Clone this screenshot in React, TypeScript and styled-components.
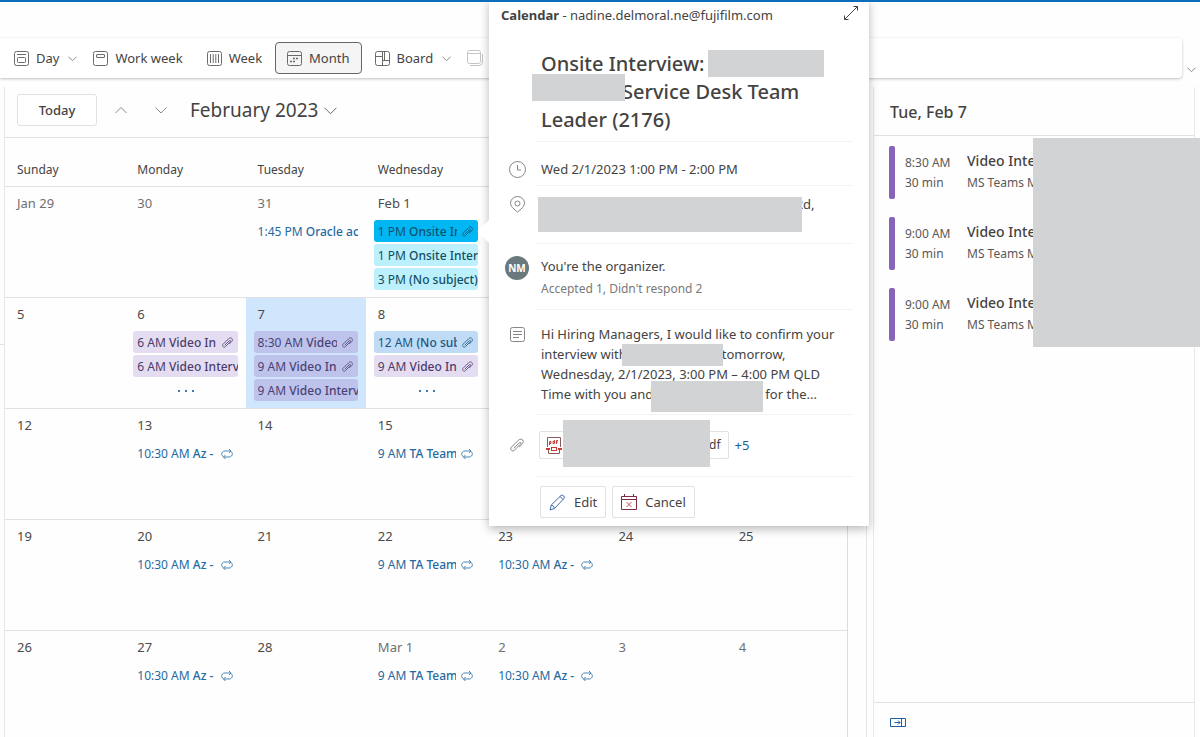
import React from "react";
import styled, { createGlobalStyle, css } from "styled-components";

const GlobalStyle = createGlobalStyle`
  *, *::before, *::after { box-sizing: border-box; }
  body {
    margin: 0;
    background: #fefefe;
    color: #444342;
    font-family: "Noto Sans", "Open Sans", sans-serif;
    font-size: 13px;
    line-height: 20px;
    overflow: hidden;
  }
  button { font: inherit; color: inherit; cursor: pointer; }
  h1, h2, h3, p, ul { margin: 0; padding: 0; }
`;

/* ---------- icons ---------- */

const Svg = styled.svg.attrs({ fill: "none", "aria-hidden": true })`
  flex: none;
  display: block;
  stroke: currentColor;
  stroke-width: 1;
`;

const Chevron = ({ size = 9, up = false }: { size?: number; up?: boolean }) => (
  <Svg width={size} height={size} viewBox="0 0 12 12">
    <path vectorEffect="non-scaling-stroke" d={up ? "M.5 9 6 3.5 11.5 9" : "M.5 3.5 6 9l5.5-5.5"} />
  </Svg>
);

const DayIcon = () => (
  <Svg width="15" height="15" viewBox="0 0 15 15">
    <rect x=".5" y=".5" width="14" height="14" rx="2" />
    <path d="M3 3.5h9" />
    <rect x="3.5" y="6.5" width="8" height="5" rx="1" />
  </Svg>
);

const WorkWeekIcon = () => (
  <Svg width="15" height="15" viewBox="0 0 15 15">
    <rect x=".5" y=".5" width="14" height="14" rx="2" />
    <rect x="3.5" y="3.5" width="8" height="3" rx=".5" />
  </Svg>
);

const WeekIcon = () => (
  <Svg width="15" height="15" viewBox="0 0 15 15">
    <rect x=".5" y=".5" width="14" height="14" rx="2" />
    <path d="M3.500 3v9M6.200 3v9M8.800 3v9M11.500 3v9" />
  </Svg>
);

const MonthIcon = () => (
  <Svg width="15" height="15" viewBox="0 0 15 15">
    <rect x=".5" y=".5" width="14" height="14" rx="2" />
    <path d="M.5 4.5h14" />
    <path strokeWidth="1.5" strokeDasharray="2 1" d="M6 7.5h6M3 10.5h6" />
  </Svg>
);

const BoardIcon = () => (
  <Svg width="15" height="15" viewBox="0 0 15 15">
    <rect x=".5" y=".5" width="14" height="14" rx="2" />
    <path d="M7.500.5v14M.5 5.500h7M7.500 9.500h7M9.500 9.500v-9" />
  </Svg>
);

const OverlayIcon = () => (
  <Svg width="17" height="17" viewBox="0 0 17 17">
    <rect x=".5" y=".5" width="13" height="13" rx="2" />
    <path d="M.5 3.5h13M3 15.5h9q3.500 0 3.500-3.500V4" />
  </Svg>
);

const ClipIcon = ({ size = 11 }: { size?: number }) => (
  <Svg width={size} height={size} viewBox="0 0 14 14">
    <path
      vectorEffect="non-scaling-stroke"
      d="M3.600 10.400 9.300 4.700c1-1 2.300.2 1.300 1.300l-6.200 6.200c-2 2-5-.9-3-3L8.200 2.400c3.200-3.100 6.700.3 4.300 3.200L9.200 9"
    />
  </Svg>
);

const RepeatIcon = () => (
  <Svg width="12" height="12" viewBox="0 0 12 12">
    <path d="M2.500 9C.5 7.500 0 5.500 1.500 4c.7-.8 1.500-1 2.500-1h6M8 1l2 2-2 2M9.500 3c2 1.500 2.500 3.500 1 5-.7.8-1.500 1-2.500 1H2.500M4.500 7l-2 2 2 2" />
  </Svg>
);

const ExpandIcon = () => (
  <Svg width="14" height="14" viewBox="0 0 14 14">
    <path d="M.8 13.200 13.200.8M9.500.5h4v4M.5 9.500v4h4" />
  </Svg>
);

const ClockIcon = () => (
  <Svg width="17" height="17" viewBox="0 0 17 17">
    <circle cx="8.500" cy="8.500" r="8" />
    <path d="M8.500 4v5H12" />
  </Svg>
);

const PinIcon = () => (
  <Svg width="17" height="17" viewBox="0 0 17 17">
    <path d="M8.500 16.200 3.400 11.500A7 7 0 0 1 1.500 7.200a7 6.700 0 0 1 14 0 7 7 0 0 1-1.900 4.300Z" />
    <circle cx="8.500" cy="7.500" r="2.500" />
  </Svg>
);

const NoteIcon = () => (
  <Svg width="15" height="15" viewBox="0 0 15 15">
    <rect x=".5" y=".5" width="14" height="14" rx="2" />
    <path d="M3 4.500h9M3 7.500h9M3 10.500h6" />
  </Svg>
);

const PdfIcon = () => (
  <Svg width="16" height="17" viewBox="0 0 16 17">
    <path stroke="#8a5a5a" d="M1.500 10V.5h13V10" />
    <path stroke="#c43e35" d="M3.500 8V4.500h1.500v2H3.500M8.500 3v3.500H7v-2h1.500M10.500 7V3.500h1.500M9.800 5h2" />
    <path stroke="#c43e35" strokeWidth="2" d="M0 12h4M12 12h4" />
    <rect stroke="#c43e35" x="5.500" y="10.500" width="5" height="3" />
    <path stroke="#8a5a5a" d="M2.500 13v3.500h11V13" />
  </Svg>
);

const PencilIcon = () => (
  <Svg width="17" height="17" viewBox="0 0 17 17">
    <path
      stroke="#3f68a8"
      d="M1 16 2.300 11 12 1.500q1.200-1 2.600.3t.3 2.700L5.500 14.500ZM11 2.500 14 5.500M2.300 11q2.500.5 3.200 3.500"
    />
  </Svg>
);

const CancelIcon = () => (
  <Svg width="16" height="16" viewBox="0 0 16 16">
    <path stroke="#7d2c45" d="M.5 2.500h15v13H.5zM.5 5.500h15M3.500 0v3M12.500 0v3" />
    <path stroke="#c0504a" d="m5.500 8 5 5M10.500 8l-5 5" />
  </Svg>
);

const DockIcon = () => (
  <Svg width="16" height="9" viewBox="0 0 16 9">
    <path d="M.5.500h15v8H.5zM11.500.5v8M4.500 4.500H10M8 2.500l2 2-2 2" />
  </Svg>
);

/* ---------- page frame ---------- */

const Page = styled.div`
  position: relative;
  height: 100vh;
  display: flex;
  flex-direction: column;
  border-top: 2px solid #0f6cb8;
  overflow: hidden;
`;

const RibbonRow = styled.div`
  display: flex;
  align-items: flex-end;
  flex: none;
  margin-top: 36px;
`;

const Ribbon = styled.div`
  flex: 1;
  display: flex;
  align-items: center;
  height: 40px;
  padding-left: 2px;
  background: #fff;
  border-radius: 0 4px 4px 0;
  box-shadow: 0 1px 3px rgba(0, 0, 0, 0.25);
`;

const RibbonToggle = styled.button`
  width: 18px;
  height: 18px;
  padding: 0 0 0 5px;
  border: 0;
  background: none;
  svg { color: #8a8a8a; }
`;

const ToolButton = styled.button<{ $active?: boolean; $split?: boolean; $faded?: boolean }>`
  display: flex;
  align-items: center;
  gap: 7px;
  height: 32px;
  padding: 0 ${(p) => (p.$split ? 3 : 11)}px 0 11px;
  border: 1px solid transparent;
  border-radius: 4px;
  background: none;
  white-space: nowrap;
  svg { color: ${(p) => (p.$faded ? "#c4c4c4" : "#6a6a6a")}; }
  ${(p) => p.$active && css`
    margin: 0 1px;
    border-color: #666;
    background: #f5f5f5;
  `}
`;

const SplitMark = styled.span`
  padding-left: 2px;
  svg { color: #8a8a8a; }
`;

const Main = styled.main`
  flex: 1;
  min-height: 0;
  display: flex;
  margin-top: 9px;
  padding-right: 5px;
`;

const Rail = styled.div`
  flex: none;
  width: 4px;
  height: 258px;
  border-bottom: 1px solid #e1e1e1;
`;

const CalendarPanel = styled.section`
  flex: 1;
  min-width: 0;
  overflow: hidden;
  border: solid #e6e6e6;
  border-width: 0 1px;
`;

/* ---------- calendar ---------- */

const CalendarHeader = styled.header`
  display: flex;
  align-items: center;
  height: 51px;
  padding: 0 12px 4px;
  border-bottom: 1px solid #e1e1e1;
`;

const TodayButton = styled.button`
  width: 80px;
  height: 32px;
  border: 1px solid #e1e1e1;
  border-radius: 3px;
  background: #fff;
  font-weight: 500;
`;

const StepButton = styled.button`
  display: flex;
  align-items: center;
  justify-content: center;
  width: 40px;
  height: 32px;
  padding: 0;
  border: 0;
  background: none;
  color: #8a8a8a;
`;

const Steps = styled.div`
  display: flex;
  margin: 0 9px 0 4px;
`;

const MonthButton = styled.button`
  display: flex;
  align-items: center;
  gap: 6px;
  padding: 0;
  border: 0;
  background: none;
  font-size: 19px;
  line-height: 28px;
  svg { color: #6a6a6a; }
`;

const MonthTable = styled.table`
  width: calc(100% - 18px);
  table-layout: fixed;
  border-collapse: separate;
  border-spacing: 0;
  border-right: 1px solid #dcdcdc;
`;

const WeekdayCell = styled.th`
  height: 49px;
  padding: 16px 0 0 12px;
  border-bottom: 1px solid #e1e1e1;
  font-size: 12px;
  font-weight: 400;
  text-align: left;
`;

const DayCell = styled.td<{ $today?: boolean }>`
  height: 111px;
  padding: 0 8px;
  border-bottom: 1px solid #e1e1e1;
  vertical-align: top;
  background: ${(p) => (p.$today ? "#cfe6fd" : "transparent")};
`;

const DayNumber = styled.div<{ $muted?: boolean }>`
  padding: 6px 4px 7px;
  color: ${(p) => (p.$muted ? "#707070" : "#4c4a48")};
`;

const EventList = styled.div`
  display: flex;
  flex-direction: column;
  gap: 2px;
`;

const tones = {
  plain: ["transparent", "#1f6aa0"],
  strong: ["#00b7f4", "#10506e"],
  cyan: ["#bdf0fd", "#104f62"],
  lilac: ["#e4dcf0", "#4b3d6b"],
  violet: ["#bdc3ea", "#4a4277"],
  blue: ["#c0dbf6", "#1d5580"],
} as const;
type Tone = keyof typeof tones;

const EventChip = styled.button<{ $tone: Tone; $icon: boolean }>`
  display: flex;
  align-items: center;
  gap: 5px;
  width: 100%;
  height: 22px;
  padding: 1px ${(p) => (p.$icon ? 5 : 0)}px 0 4px;
  border: 0;
  border-radius: 3px;
  background: ${(p) => tones[p.$tone][0]};
  color: ${(p) => tones[p.$tone][1]};
  font-size: 12px;
  text-align: left;
  svg { opacity: 0.8; }
`;

const EventText = styled.span`
  flex: 1;
  min-width: 0;
  overflow: hidden;
  white-space: nowrap;
  b { font-weight: 500; }
`;

const MoreButton = styled.button`
  display: flex;
  align-items: center;
  justify-content: center;
  gap: 5px;
  height: 24px;
  padding: 0 0 0 2px;
  border: 0;
  background: none;
`;

const Dot = styled.span`
  width: 2px;
  height: 2px;
  background: #3a79b7;
`;

/* ---------- agenda ---------- */

const AgendaPanel = styled.aside`
  position: relative;
  flex: none;
  display: flex;
  flex-direction: column;
  width: 322px;
  margin-left: 6px;
  border: solid #e8e8e8;
  border-width: 0 1px;
`;

const AgendaTitle = styled.h2`
  height: 49px;
  padding: 13px 16px 0;
  border-bottom: 1px solid #e1e1e1;
  font-size: 16px;
  line-height: 24px;
  font-weight: 500;
`;

const Agenda = styled.ul`
  flex: 1;
  display: flex;
  flex-direction: column;
  gap: 18px;
  padding: 10px 15px;
  list-style: none;
`;

const AgendaItem = styled.li`
  display: grid;
  grid-template-columns: 6px 52px 1fr;
  column-gap: 10px;
  height: 53px;
  font-size: 12px;
`;

const AgendaBar = styled.span`
  border-radius: 2px;
  background: #8764b8;
`;

const AgendaText = styled.div`
  padding-top: 7px;
  white-space: nowrap;
  overflow: hidden;
  color: #5a5856;
`;

const AgendaSubject = styled(AgendaText)`
  padding-top: 5px;
  b { display: block; height: 22px; font-size: 14px; font-weight: 500; color: #444342; }
`;

const AgendaCover = styled.div`
  position: absolute;
  top: 51px;
  right: -6px;
  width: 167px;
  height: 209px;
  background: #d2d3d5;
`;

const AgendaFooter = styled.footer`
  height: 35px;
  padding: 15px 16px 0;
  border-top: 1px solid #e1e1e1;
  color: #1c5fa5;
  button { display: block; padding: 0; border: 0; background: none; color: inherit; }
`;

/* ---------- event card ---------- */

const Card = styled.div`
  position: absolute;
  top: -2px;
  left: 489px;
  width: 380px;
  padding: 0 16px 8px 12px;
  background: #fff;
  box-shadow: 0 3px 9px rgba(0, 0, 0, 0.28);
  &::before {
    content: "";
    position: absolute;
    top: 223px;
    left: -8px;
    width: 17px;
    height: 17px;
    background: #fff;
    transform: rotate(45deg);
  }
`;

const CardHeader = styled.header`
  display: flex;
  align-items: center;
  justify-content: space-between;
  height: 30px;
  margin-right: -16px;
  padding-right: 11px;
  b { font-weight: 700; }
  button { padding: 0; margin-top: -4px; border: 0; background: none; }
`;

const Section = styled.div<{ $h: number; $pad: number; $last?: boolean }>`
  display: grid;
  grid-template-columns: 32px 1fr;
  column-gap: 4px;
  height: ${(p) => p.$h}px;
  > * { padding-top: ${(p) => p.$pad}px; }
  > :last-child { border-bottom: ${(p) => (p.$last ? 0 : 1)}px solid #f3f3f3; }
`;

const IconCell = styled.div<{ $line?: number }>`
  display: grid;
  grid-template-rows: ${(p) => p.$line ?? 20}px;
  place-items: center;
  align-content: start;
  color: #858585;
`;

const Content = styled.div`
  padding-left: 4px;
  white-space: nowrap;
`;

const CardTitle = styled.h1`
  font-size: 20px;
  font-weight: 500;
`;

const Line = styled.div<{ $h?: number }>`
  display: flex;
  align-items: flex-start;
  height: ${(p) => p.$h ?? 20}px;
  line-height: ${(p) => p.$h ?? 20}px;
  white-space: pre;
`;

const Cover = styled.span<{ $w: number; $h: number; $m?: string }>`
  position: relative;
  z-index: 1;
  flex: none;
  width: ${(p) => p.$w}px;
  height: ${(p) => p.$h}px;
  margin: ${(p) => p.$m ?? "0"};
  background: #d2d3d5;
`;

const Avatar = styled.div`
  display: flex;
  align-items: center;
  justify-content: center;
  width: 24px;
  height: 24px;
  border-radius: 50%;
  background: #69797e;
  color: #fff;
  font-size: 10px;
  font-weight: 700;
`;

const Secondary = styled.p`
  margin-top: 3px;
  font-size: 12px;
  color: #7b7977;
`;

const AttachmentRow = styled.div`
  display: flex;
  align-items: center;
  gap: 6px;
  margin-left: -2px;
`;

const Attachment = styled.button`
  display: flex;
  align-items: center;
  height: 28px;
  padding: 0 7px 0 6px;
  border: 1px solid #e1e1e1;
  border-radius: 2px;
  background: #fff;
  font-size: 12px;
`;

const MoreLink = styled.a`
  color: #14648f;
  text-decoration: none;
`;

const Actions = styled.div`
  display: flex;
  gap: 6px;
  margin-left: -1px;
`;

const ActionButton = styled.button`
  display: flex;
  align-items: center;
  gap: 8px;
  height: 32px;
  padding: 0 8px;
  border: 1px solid #e1e1e1;
  border-radius: 2px;
  background: #fff;
`;

/* ---------- data ---------- */

type Ev = { time: string; title: string; tone?: Tone; icon?: "clip" | "repeat" };
type Day = { label: string; muted?: boolean; today?: boolean; events?: Ev[]; more?: boolean };

const azure: Ev = { time: "10:30 AM", title: "Az -", icon: "repeat" };
const team: Ev = { time: "9 AM", title: "TA Team", icon: "repeat" };

const weekdays = ["Sunday", "Monday", "Tuesday", "Wednesday", "Thursday", "Friday", "Saturday"];

const weeks: Day[][] = [
  [
    { label: "Jan 29", muted: true },
    { label: "30", muted: true },
    { label: "31", muted: true, events: [{ time: "1:45 PM", title: "Oracle ac" }] },
    {
      label: "Feb 1",
      events: [
        { time: "1 PM", title: "Onsite In", tone: "strong", icon: "clip" },
        { time: "1 PM", title: "Onsite Inter", tone: "cyan" },
        { time: "3 PM", title: "(No subject)", tone: "cyan" },
      ],
    },
    { label: "2" },
    { label: "3" },
    { label: "4" },
  ],
  [
    { label: "5" },
    {
      label: "6",
      more: true,
      events: [
        { time: "6 AM", title: "Video In", tone: "lilac", icon: "clip" },
        { time: "6 AM", title: "Video Interv", tone: "lilac" },
      ],
    },
    {
      label: "7",
      today: true,
      events: [
        { time: "8:30 AM", title: "Video", tone: "violet", icon: "clip" },
        { time: "9 AM", title: "Video In", tone: "violet", icon: "clip" },
        { time: "9 AM", title: "Video Interv", tone: "violet" },
      ],
    },
    {
      label: "8",
      more: true,
      events: [
        { time: "12 AM", title: "(No sub", tone: "blue", icon: "clip" },
        { time: "9 AM", title: "Video In", tone: "lilac", icon: "clip" },
      ],
    },
    { label: "9" },
    { label: "10" },
    { label: "11" },
  ],
  [
    { label: "12" },
    { label: "13", events: [azure] },
    { label: "14" },
    { label: "15", events: [team] },
    { label: "16" },
    { label: "17" },
    { label: "18" },
  ],
  [
    { label: "19" },
    { label: "20", events: [azure] },
    { label: "21" },
    { label: "22", events: [team] },
    { label: "23", events: [azure] },
    { label: "24" },
    { label: "25" },
  ],
  [
    { label: "26" },
    { label: "27", events: [azure] },
    { label: "28" },
    { label: "Mar 1", muted: true, events: [team] },
    { label: "2", muted: true, events: [azure] },
    { label: "3", muted: true },
    { label: "4", muted: true },
  ],
];

const agenda = ["8:30 AM", "9:00 AM", "9:00 AM"];

/* ---------- parts ---------- */

const DayView = ({ day }: { day: Day }) => (
  <DayCell $today={day.today}>
    <DayNumber $muted={day.muted}>{day.label}</DayNumber>
    <EventList>
      {day.events?.map((e, i) => (
        <EventChip key={i} $tone={e.tone ?? "plain"} $icon={!!e.icon}>
          <EventText>
            {e.time} <b>{e.title}</b>
          </EventText>
          {e.icon === "clip" && <ClipIcon />}
          {e.icon === "repeat" && <RepeatIcon />}
        </EventChip>
      ))}
      {day.more && (
        <MoreButton aria-label="More events">
          <Dot />
          <Dot />
          <Dot />
        </MoreButton>
      )}
    </EventList>
  </DayCell>
);

const EventCard = () => (
  <Card role="dialog" aria-label="Event details">
    <CardHeader>
      <span>
        <b>Calendar</b> - nadine.delmoral.ne@fujifilm.com
      </span>
      <button aria-label="Expand">
        <ExpandIcon />
      </button>
    </CardHeader>
    <Section $h={112} $pad={20}>
      <IconCell />
      <Content>
        <CardTitle>
          <Line $h={28}>
            {"Onsite Interview: "}
            <Cover $w={116} $h={27} $m="0 0 0 -2px" />
          </Line>
          <Line $h={28}>
            <Cover $w={93} $h={27} $m="-4px -3px 0 -9px" />
            Service Desk Team
          </Line>
          <Line $h={28}>Leader (2176)</Line>
        </CardTitle>
      </Content>
    </Section>
    <Section $h={44} $pad={17}>
      <IconCell><ClockIcon /></IconCell>
      <Content>Wed 2/1/2023 1:00 PM - 2:00 PM</Content>
    </Section>
    <Section $h={58} $pad={8}>
      <IconCell><PinIcon /></IconCell>
      <Content>
        <Line>
          <Cover $w={264} $h={35} $m="3px -7px 0 -3px" />
          Rd,
        </Line>
      </Content>
    </Section>
    <Section $h={66} $pad={12}>
      <IconCell $line={24}><Avatar>NM</Avatar></IconCell>
      <Content>
        <p>You're the organizer.</p>
        <Secondary>Accepted 1, Didn't respond 2</Secondary>
      </Content>
    </Section>
    <Section $h={105} $pad={14}>
      <IconCell><NoteIcon /></IconCell>
      <Content>
        <Line>Hi Hiring Managers, I would like to confirm your</Line>
        <Line>
          interview with
          <Cover $w={101} $h={22} $m="0 -1px 0 -5px" />
          tomorrow,
        </Line>
        <Line>Wednesday, 2/1/2023, 3:00 PM – 4:00 PM QLD</Line>
        <Line>
          Time with you and
          <Cover $w={112} $h={31} $m="-3px 2px 0 -2px" />
          for the...
        </Line>
      </Content>
    </Section>
    <Section $h={62} $pad={16}>
      <IconCell $line={28}><ClipIcon size={14} /></IconCell>
      <Content>
        <AttachmentRow>
          <Attachment>
            <PdfIcon />
            <Cover $w={147} $h={47} $m="-4px -1px 0 1px" />
            df
          </Attachment>
          <MoreLink href="#attachments">+5</MoreLink>
        </AttachmentRow>
      </Content>
    </Section>
    <Section $h={41} $pad={9} $last>
      <IconCell />
      <Content>
        <Actions>
          <ActionButton><PencilIcon />Edit</ActionButton>
          <ActionButton><CancelIcon />Cancel</ActionButton>
        </Actions>
      </Content>
    </Section>
  </Card>
);

export default function App() {
  return (
    <>
      <GlobalStyle />
      <Page>
        <RibbonRow>
          <Ribbon role="toolbar" aria-label="View">
            <ToolButton $split><DayIcon />Day<SplitMark><Chevron /></SplitMark></ToolButton>
            <ToolButton><WorkWeekIcon />Work week</ToolButton>
            <ToolButton><WeekIcon />Week</ToolButton>
            <ToolButton $active><MonthIcon />Month</ToolButton>
            <ToolButton $split><BoardIcon />Board<SplitMark><Chevron /></SplitMark></ToolButton>
            <ToolButton $faded aria-label="Overlay"><OverlayIcon /></ToolButton>
          </Ribbon>
          <RibbonToggle aria-label="Ribbon options"><Chevron /></RibbonToggle>
        </RibbonRow>
        <Main>
          <Rail />
          <CalendarPanel>
            <CalendarHeader>
              <TodayButton>Today</TodayButton>
              <Steps>
                <StepButton aria-label="Previous month"><Chevron size={12} up /></StepButton>
                <StepButton aria-label="Next month"><Chevron size={12} /></StepButton>
              </Steps>
              <MonthButton>February 2023<Chevron size={13} /></MonthButton>
            </CalendarHeader>
            <MonthTable>
              <thead>
                <tr>
                  {weekdays.map((d) => <WeekdayCell key={d} scope="col">{d}</WeekdayCell>)}
                </tr>
              </thead>
              <tbody>
                {weeks.map((week, i) => (
                  <tr key={i}>
                    {week.map((day) => <DayView key={day.label} day={day} />)}
                  </tr>
                ))}
              </tbody>
            </MonthTable>
          </CalendarPanel>
          <AgendaPanel>
            <AgendaTitle>Tue, Feb 7</AgendaTitle>
            <Agenda>
              {agenda.map((time, i) => (
                <AgendaItem key={i}>
                  <AgendaBar />
                  <AgendaText>{time}<br />30 min</AgendaText>
                  <AgendaSubject><b>Video Interview</b>MS Teams Meeting</AgendaSubject>
                </AgendaItem>
              ))}
            </Agenda>
            <AgendaFooter>
              <button aria-label="Close pane"><DockIcon /></button>
            </AgendaFooter>
            <AgendaCover />
          </AgendaPanel>
        </Main>
        <EventCard />
      </Page>
    </>
  );
}
